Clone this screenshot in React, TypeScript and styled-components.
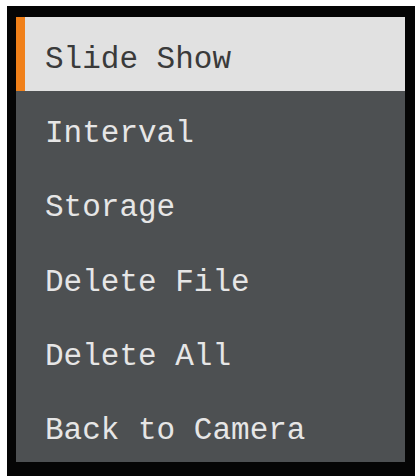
import React from "react";
import styled, { createGlobalStyle } from "styled-components";

const Global = createGlobalStyle`
  html, body { margin: 0; padding: 0; background: #ffffff; }
  body { width: 418px; height: 476px; overflow: hidden; }
`;

const Page = styled.div`
  width: 418px;
  height: 476px;
  padding: 6px 3px 0 7px;
  box-sizing: border-box;
  display: flex;
`;

const Frame = styled.div`
  flex: 1;
  background: #050505;
  padding: 11px 10px 14px 9px;
  display: flex;
`;

const Menu = styled.ul`
  flex: 1;
  margin: 0;
  padding: 0;
  list-style: none;
  background: #4d5052;
  display: flex;
  flex-direction: column;
`;

const Item = styled.li<{ $selected?: boolean }>`
  flex: 1;
  display: flex;
  align-items: center;
  padding-top: 11px;
  box-sizing: border-box;
  font-family: "Liberation Mono", "DejaVu Sans Mono", monospace;
  font-size: 31px;
  letter-spacing: 0;
  color: ${(p) => (p.$selected ? "#3a3a3a" : "#e6e6e6")};
  background: ${(p) => (p.$selected ? "#e1e1e1" : "transparent")};
  border-left: solid ${(p) => (p.$selected ? "#f08019" : "transparent")};
  border-left-width: ${(p) => (p.$selected ? "9px" : "0")};
  padding-left: ${(p) => (p.$selected ? "20px" : "29px")};
`;

const items = [
  "Slide Show",
  "Interval",
  "Storage",
  "Delete File",
  "Delete All",
  "Back to Camera",
];

export default function App() {
  return (
    <>
      <Global />
      <Page>
        <Frame>
          <Menu>
            {items.map((t, i) => (
              <Item key={t} $selected={i === 0}>
                {t}
              </Item>
            ))}
          </Menu>
        </Frame>
      </Page>
    </>
  );
}
